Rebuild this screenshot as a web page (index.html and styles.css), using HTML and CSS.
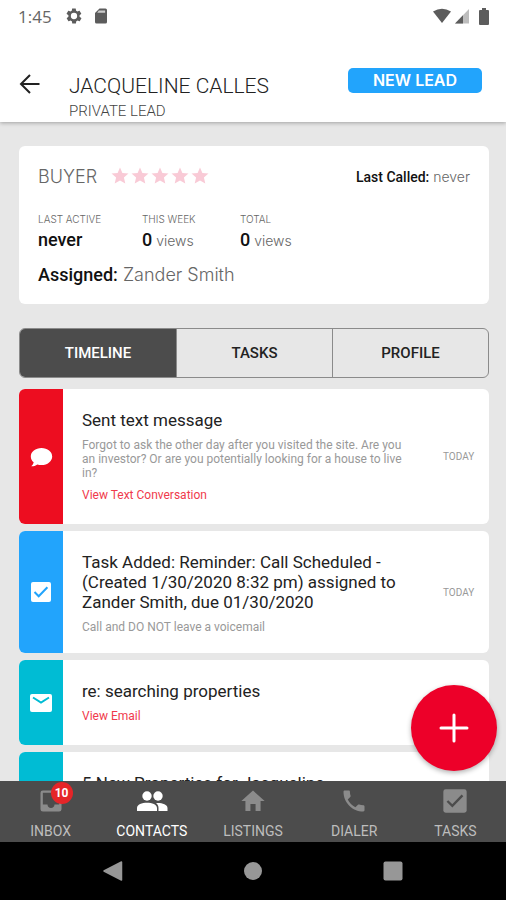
FILE: index.html
```html
<!DOCTYPE html>
<html lang="en">
<head>
<meta charset="utf-8">
<meta name="viewport" content="width=device-width, initial-scale=1">
<title>Jacqueline Calles</title>
<link rel="stylesheet" href="styles.css">
</head>
<body>
<header class="top">
  <div class="status">
    <span class="clock">1:45</span>
    <svg class="status-icon gear" viewBox="0 0 24 24" aria-hidden="true"><path fill-rule="evenodd" d="M19.4 13c.1-.3.1-.7.1-1s0-.7-.1-1l2.100-1.600c.2-.2.300-.4.100-.6l-2-3.500c-.1-.2-.4-.3-.6-.2l-2.500 1c-.5-.4-1.100-.7-1.700-1l-.4-2.600c0-.3-.2-.5-.5-.5h-4c-.3 0-.5.2-.5.5l-.4 2.600c-.6.300-1.200.6-1.700 1l-2.500-1c-.2-.1-.5 0-.6.2l-2 3.500c-.1.200-.1.500.1.600L4.600 11c0 .3-.1.700-.1 1s0 .7.1 1l-2.100 1.600c-.2.200-.3.400-.1.600l2 3.500c.1.200.4.300.6.200l2.500-1c.5.400 1.100.7 1.700 1l.4 2.600c0 .3.200.5.500.5h4c.3 0 .5-.2.500-.5l.4-2.600c.6-.3 1.200-.6 1.700-1l2.500 1c.2.100.5 0 .6-.2l2-3.500c.1-.2.1-.5-.1-.6zM12 16.200a4.200 4.200 0 1 1 0-8.400 4.200 4.200 0 0 1 0 8.400z"/></svg>
    <svg class="status-icon sd" viewBox="0 0 24 24" aria-hidden="true"><path d="M18 2h-8L4 8v12a2 2 0 0 0 2 2h12a2 2 0 0 0 2-2V4a2 2 0 0 0-2-2z"/><path fill="#ccc" d="M9 4.500h8.500v3H7z"/></svg>
    <span class="status-right">
      <svg width="20" height="16" viewBox="0 0 20 16" aria-hidden="true"><path d="M1 3.500Q10-2 19 3.500L10 15z"/></svg>
      <svg width="16" height="16" viewBox="0 0 16 16" aria-hidden="true"><path fill="#bdbdbd" d="M1 15.500L15 1v14.500z"/><path d="M1 15.500L9 7.200v8.300z"/></svg>
      <svg class="battery" width="10" height="17" viewBox="0 0 10 17" aria-hidden="true"><path d="M3 0h4v2h2q1 0 1 1v13q0 1-1 1H1q-1 0-1-1V3q0-1 1-1h2z"/></svg>
    </span>
  </div>
  <div class="appbar">
    <button class="back" type="button" aria-label="Back"><svg width="22" height="22" viewBox="0 0 22 22" aria-hidden="true"><path d="M20.500 11H2.500M11 2L2 11l9 9"/></svg></button>
    <div class="who">
      <h1>JACQUELINE CALLES</h1>
      <p>PRIVATE LEAD</p>
    </div>
    <button class="stage" type="button">NEW LEAD</button>
  </div>
</header>

<main>
  <section class="summary">
    <div class="row">
      <span class="role">BUYER</span>
      <svg class="stars" width="98" height="18" viewBox="0 0 98 18" role="img" aria-label="5 stars">
        <defs><path id="star" d="M9 .5l2.400 5.600 6.100.5-4.600 4 1.400 6L9 13.400l-5.300 3.200 1.400-6-4.600-4 6.100-.5z"/></defs>
        <use href="#star"/><use href="#star" x="20"/><use href="#star" x="40"/><use href="#star" x="60"/><use href="#star" x="80"/>
      </svg>
      <span class="called"><b>Last Called:</b> never</span>
    </div>
    <dl class="stats">
      <div><dt>LAST ACTIVE</dt><dd><b>never</b></dd></div>
      <div><dt>THIS WEEK</dt><dd><b>0</b> views</dd></div>
      <div><dt>TOTAL</dt><dd><b>0</b> views</dd></div>
    </dl>
    <p class="assigned"><b>Assigned:</b> Zander Smith</p>
  </section>

  <div class="tabs" role="tablist">
    <button type="button" role="tab" aria-selected="true">TIMELINE</button>
    <button type="button" role="tab" aria-selected="false">TASKS</button>
    <button type="button" role="tab" aria-selected="false">PROFILE</button>
  </div>

  <div class="timeline">
    <article class="item">
      <div class="mark red"><svg width="24" height="24" viewBox="0 0 24 24" aria-hidden="true"><path d="M12.500 3C6.500 3 1.800 6.700 1.800 11.400c0 2.400 1.100 4.400 2.900 5.900-.3 1.500-1.200 2.900-2.400 4 2.100.1 4.300-.6 6-1.900 1.300.4 2.700.6 4.200.6 6 0 10.700-3.800 10.700-8.600S18.500 3 12.500 3z"/></svg></div>
      <div class="text">
        <h2>Sent text message</h2>
        <p>Forgot to ask the other day after you visited the site. Are you an investor? Or are you potentially looking for a house to live in?</p>
        <a href="#conversation">View Text Conversation</a>
      </div>
      <time>TODAY</time>
    </article>
    <article class="item">
      <div class="mark blue"><svg width="24" height="24" viewBox="0 0 24 24" aria-hidden="true"><rect x="2" y="2" width="20" height="20" rx="2"/><path class="tick" d="M5.500 12l4.200 4.200 8.700-9"/></svg></div>
      <div class="text">
        <h2>Task Added: Reminder: Call Scheduled - (Created 1/30/2020 8:32 pm) assigned to Zander Smith, due 01/30/2020</h2>
        <p>Call and DO NOT leave a voicemail</p>
      </div>
      <time>TODAY</time>
    </article>
    <article class="item">
      <div class="mark teal"><svg width="24" height="24" viewBox="0 0 24 24" aria-hidden="true"><rect x="1" y="3" width="22" height="18" rx="2"/><path class="tick" d="M4 6.500l8 5 8-5"/></svg></div>
      <div class="text">
        <h2>re: searching properties</h2>
        <a href="#email">View Email</a>
      </div>
      <time></time>
    </article>
    <article class="item">
      <div class="mark teal"></div>
      <div class="text">
        <h2>5 New Properties for Jacqueline</h2>
      </div>
      <time></time>
    </article>
  </div>
  <button class="fab" type="button" aria-label="Add"><svg width="30" height="30" viewBox="0 0 30 30" aria-hidden="true"><path d="M15 2v26M2 15h26"/></svg></button>
</main>

<nav class="nav">
  <a href="#inbox"><span class="ico"><svg viewBox="0 0 24 24" aria-hidden="true"><path fill-rule="evenodd" d="M19 3H5a2 2 0 0 0-2 2v14a2 2 0 0 0 2 2h14a2 2 0 0 0 2-2V5a2 2 0 0 0-2-2zm0 12h-4c0 1.700-1.300 3-3 3s-3-1.300-3-3H5V5h14z"/></svg><span class="badge">10</span></span>INBOX</a>
  <a href="#contacts" class="active" aria-current="page"><span class="ico"><svg class="people" viewBox="0 0 32 22" aria-hidden="true"><circle cx="11" cy="6" r="4.700"/><circle cx="22" cy="6" r="4.700"/><path d="M1 21v-3c0-3.500 5-5.300 10-5.300s10 1.800 10 5.300v3zM22.500 21v-3c0-2-.9-3.700-2.500-4.900 5-.5 11.500 1 11.500 4.900v3z"/></svg></span>CONTACTS</a>
  <a href="#listings"><span class="ico"><svg viewBox="0 0 24 24" aria-hidden="true"><path d="M9.800 20.500v-6h4.400v6h4.300V12H22L12 3 2 12h3.500v8.500z"/></svg></span>LISTINGS</a>
  <a href="#dialer"><span class="ico"><svg viewBox="0 0 24 24" aria-hidden="true"><path d="M6.600 10.800c1.400 2.800 3.800 5.100 6.600 6.600l2.200-2.200c.3-.3.700-.4 1-.2 1.100.4 2.300.6 3.600.6.500 0 1 .4 1 1V20c0 .5-.5 1-1 1C10.600 21 3 13.400 3 4c0-.6.500-1 1-1h3.500c.6 0 1 .4 1 1 0 1.200.2 2.500.6 3.600.1.300 0 .7-.3 1z"/></svg></span>DIALER</a>
  <a href="#tasks"><span class="ico"><svg viewBox="0 0 24 24" aria-hidden="true"><rect x="2" y="2" width="20" height="20" rx="2"/><path class="tick" d="M5.500 12l4.200 4.200 8.700-9"/></svg></span>TASKS</a>
</nav>

<div class="system">
  <button type="button" aria-label="System back"><svg width="20" height="20" viewBox="0 0 20 20" aria-hidden="true"><path d="M1 10L18.500 1v18z" stroke-width="1.500" stroke="#979797" stroke-linejoin="round"/></svg></button>
  <button type="button" aria-label="Home"><svg width="20" height="20" viewBox="0 0 20 20" aria-hidden="true"><circle cx="10" cy="10" r="9"/></svg></button>
  <button type="button" aria-label="Recent apps"><svg width="20" height="20" viewBox="0 0 20 20" aria-hidden="true"><rect x=".5" y=".5" width="19" height="19" rx="2"/></svg></button>
</div>
</body>
</html>
```
FILE: styles.css
```css
* { box-sizing: border-box; }
body, h1, h2, p, dl, dd { margin: 0; }
body {
  height: 100vh;
  display: flex;
  flex-direction: column;
  overflow: hidden;
  background: #e7e7e7;
  color: #222;
  font-family: Roboto, "Liberation Sans", sans-serif;
}
button { border: 0; padding: 0; background: none; font: inherit; color: inherit; }
a { text-decoration: none; }
svg { display: block; }

.top {
  flex: none;
  position: relative;
  z-index: 1;
  background: #fff;
  box-shadow: 0 1px 4px rgba(0, 0, 0, .3);
}
.status {
  display: flex;
  align-items: center;
  height: 32px;
  padding: 0 17px 0 18px;
  fill: #5c5c5c;
}
.clock { font-family: "Open Sans", sans-serif; font-size: 17px; color: #666; }
.status-icon { width: 18px; height: 18px; }
.gear { margin-left: 13px; }
.sd { margin-left: 9px; }
.status-right { display: flex; align-items: center; gap: 2px; margin-left: auto; }
.battery { margin-left: 7px; }

.appbar { display: flex; align-items: flex-start; padding: 36px 24px 0 19px; height: 90px; }
.back { margin-top: 5px; }
.back svg { fill: none; stroke: #222; stroke-width: 2; }
.who { flex: 1; margin-left: 28px; }
.who h1 { padding-top: 4px; font-size: 21px; line-height: 28px; font-weight: 300; }
.who p { font-size: 15px; line-height: 22px; font-weight: 300; color: #444; }
.stage {
  width: 134px;
  height: 25px;
  border-radius: 5px;
  background: #22a4fc;
  color: #fff;
  font: 600 16px/25px Inter, sans-serif;
}

main {
  flex: 1;
  min-height: 0;
  position: relative;
  overflow: hidden;
  padding: 24px 17px 0 19px;
}

.summary {
  padding: 19px 19px 17px;
  border-radius: 6px;
  background: #fff;
  color: #666;
  font-family: Inter, sans-serif;
  font-weight: 300;
}
.summary b { font-family: Roboto, sans-serif; font-weight: 500; color: #111; }
.row { display: flex; align-items: center; height: 22px; }
.role { font-size: 18px; }
.stars { margin-left: 14px; fill: #f9cad6; }
.called { margin-left: auto; font-size: 14px; }
.stats { display: grid; grid-template-columns: 104px 98px 1fr; margin-top: 24px; }
.stats dt { font-size: 10px; line-height: 16px; }
.stats dd { font-size: 14px; line-height: 26px; }
.stats dd b { font-size: 18px; }
.assigned { margin-top: 9px; font-size: 18px; line-height: 24px; }

.tabs {
  display: grid;
  grid-template-columns: repeat(3, 1fr);
  height: 50px;
  margin-top: 24px;
  border: 1px solid #8b8b8b;
  border-radius: 6px;
  overflow: hidden;
}
.tabs button { font-size: 15px; font-weight: 500; }
.tabs button + button { border-left: 1px solid #8b8b8b; }
.tabs [aria-selected="true"] { background: #4c4c4c; color: #fff; }

.timeline { display: grid; gap: 7px; margin-top: 11px; }
.item {
  display: grid;
  grid-template-columns: 44px 1fr 60px;
  border-radius: 6px;
  background: #fff;
  overflow: hidden;
}
.mark { display: flex; align-items: center; justify-content: center; fill: #fff; color: #22a4fc; }
.tick { fill: none; stroke: currentColor; stroke-width: 2; }
.red { background: #ed0d20; }
.blue { background: #22a4fc; }
.teal { background: #00bcd4; color: #00bcd4; }
.text { padding: 21px 14px 19px 19px; }
.text h2 { font-size: 17px; line-height: 20px; font-weight: 400; color: #222; }
.text p, .text a { display: block; margin-top: 8px; font-size: 12px; line-height: 14px; color: #999; }
.text a { padding-bottom: 3px; color: #f03a4c; }
.item time { align-self: center; padding-left: 14px; font-size: 10px; color: #999; }

.fab {
  position: absolute;
  right: 9px;
  bottom: 10px;
  width: 86px;
  height: 86px;
  display: grid;
  place-items: center;
  border-radius: 50%;
  background: #ed0029;
  box-shadow: 0 2px 5px rgba(0, 0, 0, .3);
}
.fab svg { stroke: #fff; stroke-width: 3; stroke-linecap: round; }

.nav {
  flex: none;
  display: grid;
  grid-template-columns: repeat(5, 1fr);
  height: 61px;
  background: #4c4c4c;
}
.nav a {
  display: flex;
  flex-direction: column;
  align-items: center;
  padding-top: 6px;
  font-size: 14px;
  line-height: 20px;
  color: #bdbdbd;
  fill: #8b8b8b;
}
.nav .ico { position: relative; margin-bottom: 6px; color: #4c4c4c; }
.nav .ico svg { height: 28px; width: 28px; }
.nav .ico .people { width: 32px; }
.nav .active { color: #fff; fill: #fff; }
.badge {
  position: absolute;
  top: -5px;
  right: -8px;
  width: 22px;
  height: 22px;
  border-radius: 50%;
  background: #e52528;
  color: #fff;
  font-size: 12px;
  line-height: 22px;
  font-weight: 700;
  text-align: center;
}

.system {
  flex: none;
  display: flex;
  align-items: center;
  justify-content: space-around;
  height: 58px;
  padding: 0 43px;
  background: #000;
  fill: #979797;
}
```
